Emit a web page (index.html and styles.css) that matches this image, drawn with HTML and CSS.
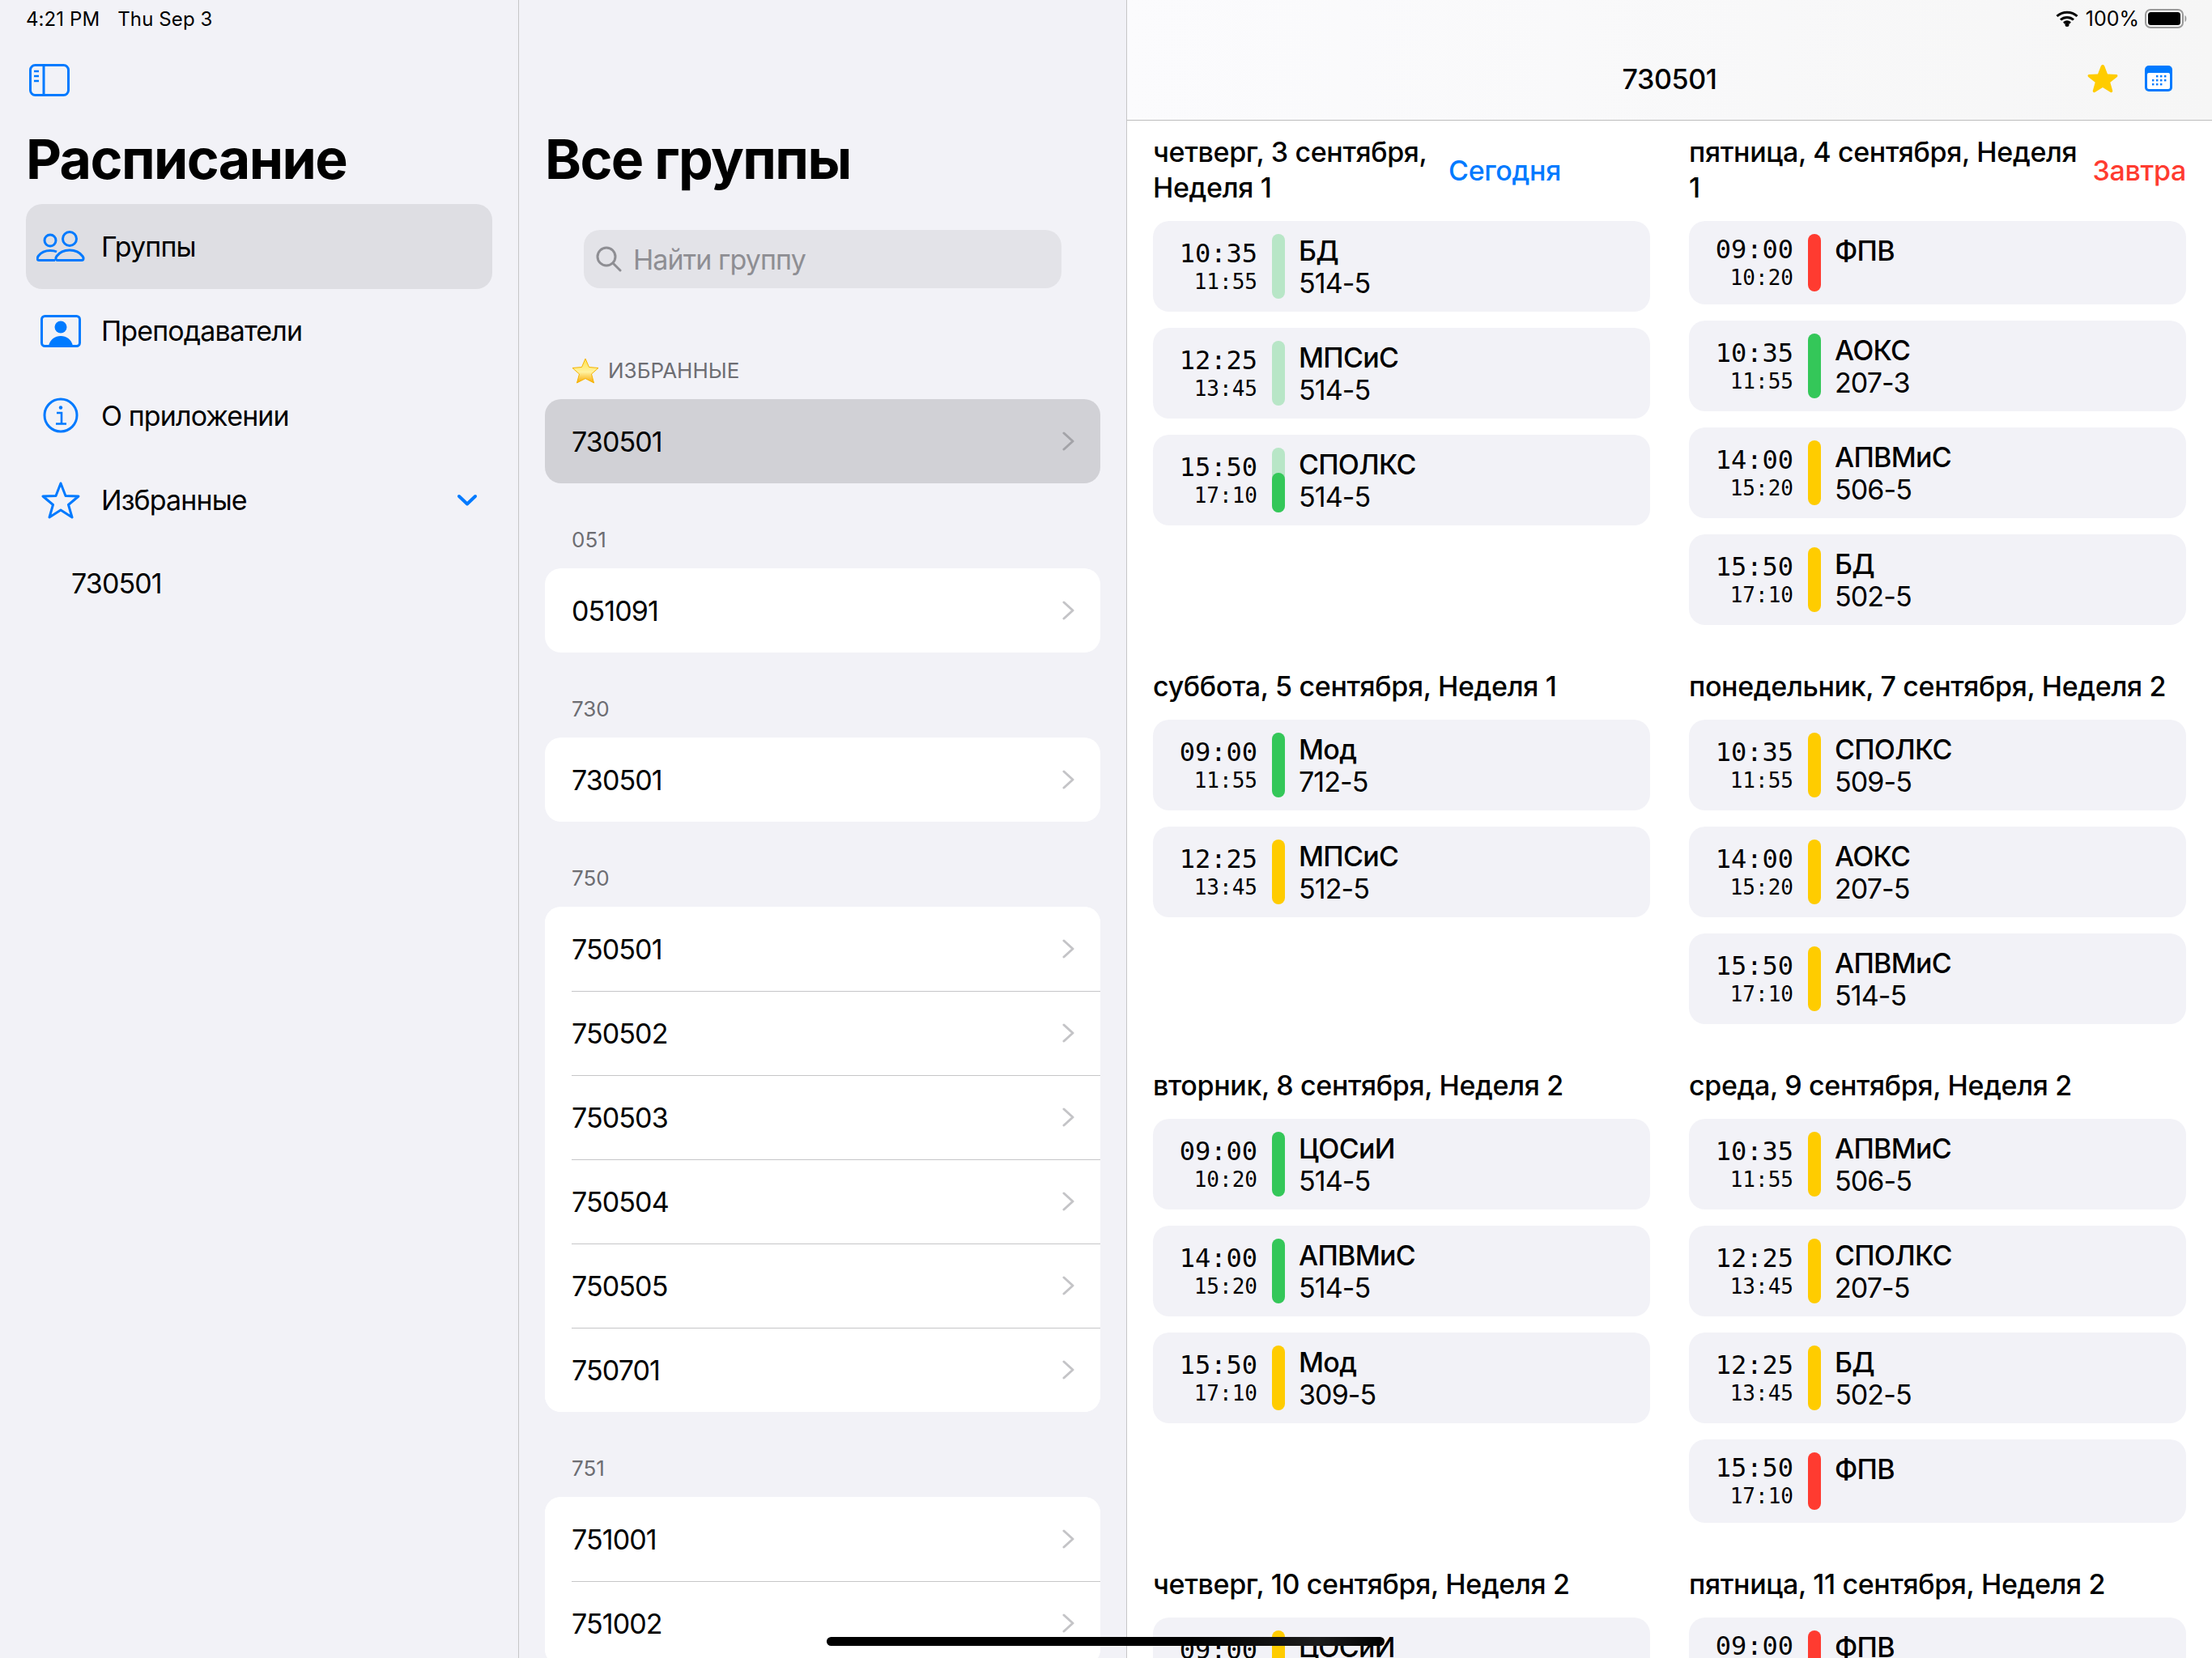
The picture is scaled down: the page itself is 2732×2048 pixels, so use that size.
FILE: index.html
```html
<!DOCTYPE html>
<html>
<head>
    <title>Расписание</title>
    <link rel="stylesheet" href="styles.css">
</head>
<body>
    <svg class="sprite" width="0" height="0">
        <defs>
            <symbol id="chevron" viewBox="0 0 15 24">
                <path d="M2 2 L13 12 L2 22" fill="none" stroke="currentColor" stroke-width="3" stroke-linecap="round" stroke-linejoin="round"/>
            </symbol>
        </defs>
    </svg>

    <div class="app">
        <aside class="sidebar">
            <div class="status-left"><span>4:21 PM</span><span>Thu Sep 3</span></div>
            <div class="toolbar">
                <svg width="50" height="40" viewBox="0 0 50 40" fill="none" stroke="#007aff">
                    <rect x="1.5" y="1.5" width="47" height="37" rx="6" stroke-width="3"/>
                    <path d="M18 1.5 V38.5" stroke-width="3"/>
                    <path d="M6 9 H12 M6 15 H12 M6 21 H12" stroke-width="2.4"/>
                </svg>
            </div>
            <h1 class="large-title">Расписание</h1>
            <nav class="side-menu">
                <div class="side-item active">
                    <span class="side-icon">
                        <svg width="60" height="38" viewBox="0 0 60 38" fill="none" stroke="#007aff" stroke-width="3">
                            <circle cx="17" cy="12" r="7"/>
                            <circle cx="41" cy="10" r="8.5"/>
                            <path d="M23 36.5 H3 C0.5 36.5 1 33 2.5 31 C6 26.5 11 24.5 17 24.5 C20 24.5 23 25 25 26"/>
                            <path d="M26 36.5 C23.5 36.5 23.5 33.5 25 31.5 C29 26 35 24 41 24 C47 24 53 26 57 31.5 C58.5 33.5 58.5 36.5 56 36.5 Z"/>
                        </svg>
                    </span>
                    <span>Группы</span>
                </div>
                <div class="side-item">
                    <span class="side-icon">
                        <svg width="50" height="40" viewBox="0 0 50 40">
                            <rect x="1.5" y="1.5" width="47" height="37" rx="4" fill="none" stroke="#007aff" stroke-width="3"/>
                            <circle cx="25" cy="15" r="7.5" fill="#007aff"/>
                            <path d="M10 38 C12 30 18 26 25 26 C32 26 38 30 40 38 Z" fill="#007aff"/>
                        </svg>
                    </span>
                    <span>Преподаватели</span>
                </div>
                <div class="side-item">
                    <span class="side-icon">
                        <svg width="44" height="44" viewBox="0 0 44 44" fill="none" stroke="#007aff">
                            <circle cx="22" cy="22" r="20" stroke-width="3"/>
                            <circle cx="22" cy="12.5" r="2.2" fill="#007aff" stroke="none"/>
                            <path d="M17 19 H23 V32 M16 32.5 H29" stroke-width="2.6"/>
                        </svg>
                    </span>
                    <span>О приложении</span>
                </div>
                <div class="side-item">
                    <span class="side-icon">
                        <svg width="48" height="46" viewBox="0 0 48 46" fill="none" stroke="#007aff" stroke-width="3" stroke-linejoin="round">
                            <path d="M24 2 L30 17.5 L46 18 L33.5 28.5 L38 44 L24 35 L10 44 L14.5 28.5 L2 18 L18 17.5 Z"/>
                        </svg>
                    </span>
                    <span>Избранные</span>
                    <svg class="side-chevron" width="26" height="16" viewBox="0 0 26 16" fill="none" stroke="#007aff" stroke-width="4" stroke-linecap="round" stroke-linejoin="round">
                        <path d="M3 3 L13 12.5 L23 3"/>
                    </svg>
                </div>
                <div class="side-sub">730501</div>
            </nav>
        </aside>

        <section class="groups">
            <h1 class="large-title">Все группы</h1>
            <div class="search">
                <svg width="32" height="32" viewBox="0 0 32 32" fill="none" stroke="#8e8e93" stroke-width="3" stroke-linecap="round">
                    <circle cx="13" cy="13" r="11"/>
                    <path d="M21 21 L30 30"/>
                </svg>
                <span>Найти группу</span>
            </div>

            <div class="section-label first">
                <svg width="34" height="32" viewBox="0 0 34 32">
                    <defs>
                        <linearGradient id="starFill" x1="0" y1="0" x2="0" y2="1">
                            <stop offset="0" stop-color="#ffe24d"/>
                            <stop offset="0.55" stop-color="#fff2a0"/>
                            <stop offset="1" stop-color="#f9a800"/>
                        </linearGradient>
                    </defs>
                    <path d="M17 1 L21.5 11.5 L33 12.5 L24.5 20 L27.5 31 L17 25.5 L6.5 31 L9.5 20 L1 12.5 L12.5 11.5 Z" fill="url(#starFill)" stroke="#f5b400" stroke-width="1" stroke-linejoin="round"/>
                </svg>
                <span>ИЗБРАННЫЕ</span>
            </div>
            <div class="group-card">
                <div class="group-row selected"><div class="row-inner"><span>730501</span><svg class="row-chevron" width="15" height="24"><use href="#chevron"/></svg></div></div>
            </div>

            <div class="section-label"><span>051</span></div>
            <div class="group-card">
                <div class="group-row"><div class="row-inner"><span>051091</span><svg class="row-chevron" width="15" height="24"><use href="#chevron"/></svg></div></div>
            </div>

            <div class="section-label"><span>730</span></div>
            <div class="group-card">
                <div class="group-row"><div class="row-inner"><span>730501</span><svg class="row-chevron" width="15" height="24"><use href="#chevron"/></svg></div></div>
            </div>

            <div class="section-label"><span>750</span></div>
            <div class="group-card">
                <div class="group-row"><div class="row-inner"><span>750501</span><svg class="row-chevron" width="15" height="24"><use href="#chevron"/></svg></div></div>
                <div class="group-row"><div class="row-inner"><span>750502</span><svg class="row-chevron" width="15" height="24"><use href="#chevron"/></svg></div></div>
                <div class="group-row"><div class="row-inner"><span>750503</span><svg class="row-chevron" width="15" height="24"><use href="#chevron"/></svg></div></div>
                <div class="group-row"><div class="row-inner"><span>750504</span><svg class="row-chevron" width="15" height="24"><use href="#chevron"/></svg></div></div>
                <div class="group-row"><div class="row-inner"><span>750505</span><svg class="row-chevron" width="15" height="24"><use href="#chevron"/></svg></div></div>
                <div class="group-row"><div class="row-inner"><span>750701</span><svg class="row-chevron" width="15" height="24"><use href="#chevron"/></svg></div></div>
            </div>

            <div class="section-label"><span>751</span></div>
            <div class="group-card">
                <div class="group-row"><div class="row-inner"><span>751001</span><svg class="row-chevron" width="15" height="24"><use href="#chevron"/></svg></div></div>
                <div class="group-row"><div class="row-inner"><span>751002</span><svg class="row-chevron" width="15" height="24"><use href="#chevron"/></svg></div></div>
            </div>
        </section>

        <main class="detail">
            <header class="detail-nav">
                <div class="status-right">
                    <svg class="wifi" width="28" height="20" viewBox="0 0 28 20" fill="none" stroke="#000" stroke-width="3">
                        <path d="M1.5 7 C8.5 0.5 19.5 0.5 26.5 7"/>
                        <path d="M6 11.5 C10.5 7.5 17.5 7.5 22 11.5"/>
                        <path d="M10 15.5 C12.5 13.5 15.5 13.5 18 15.5"/>
                        <circle cx="14" cy="17.5" r="2.5" fill="#000" stroke="none"/>
                    </svg>
                    <span>100%</span>
                    <svg width="53" height="24" viewBox="0 0 53 24">
                        <rect x="1" y="1" width="46" height="22" rx="6" fill="none" stroke="#9a9a9a" stroke-width="2"/>
                        <rect x="4" y="4" width="40" height="16" rx="3.5" fill="#000"/>
                        <path d="M49.5 8 C52 9 52 15 49.5 16 Z" fill="#9a9a9a"/>
                    </svg>
                </div>
                <div class="nav-row">
                    <span></span>
                    <div class="nav-title">730501</div>
                    <div class="nav-actions">
                        <svg width="38" height="36" viewBox="0 0 38 36">
                            <path d="M19 1 C20 1 20.8 1.6 21.2 2.6 L25 12.6 L35.8 13.1 C37.4 13.2 38 15 36.8 16 L28.3 22.7 L31.2 33 C31.6 34.6 30 35.7 28.7 34.9 L19 29 L9.3 34.9 C8 35.7 6.4 34.6 6.8 33 L9.7 22.7 L1.2 16 C0 15 0.6 13.2 2.2 13.1 L13 12.6 L16.8 2.6 C17.2 1.6 18 1 19 1 Z" fill="#ffcc00"/>
                        </svg>
                        <svg width="34" height="32" viewBox="0 0 34 32">
                            <rect x="0" y="0" width="34" height="32" rx="5" fill="#007aff"/>
                            <rect x="3" y="9" width="28" height="20" rx="2" fill="#fff"/>
                            <g fill="#007aff">
                                <rect x="14" y="12" width="2.4" height="2.4"/><rect x="19" y="12" width="2.4" height="2.4"/><rect x="24" y="12" width="2.4" height="2.4"/>
                                <rect x="9" y="17" width="2.4" height="2.4"/><rect x="14" y="17" width="2.4" height="2.4"/><rect x="19" y="17" width="2.4" height="2.4"/><rect x="24" y="17" width="2.4" height="2.4"/>
                                <rect x="9" y="22" width="2.4" height="2.4"/><rect x="14" y="22" width="2.4" height="2.4"/><rect x="19" y="22" width="2.4" height="2.4"/>
                            </g>
                        </svg>
                    </div>
                </div>
            </header>

            <div class="days">
                <div class="day">
                    <div class="day-head">
                        <div class="day-title narrow">четверг, 3 сентября, Неделя 1</div>
                        <div class="day-tag today">Сегодня</div>
                    </div>
                    <div class="lesson">
                        <div class="times"><div class="t-start">10:35</div><div class="t-end">11:55</div></div>
                        <div class="bar past"></div>
                        <div class="info"><div class="subject">БД</div><div class="room">514-5</div></div>
                    </div>
                    <div class="lesson">
                        <div class="times"><div class="t-start">12:25</div><div class="t-end">13:45</div></div>
                        <div class="bar past"></div>
                        <div class="info"><div class="subject">МПСиС</div><div class="room">514-5</div></div>
                    </div>
                    <div class="lesson">
                        <div class="times"><div class="t-start">15:50</div><div class="t-end">17:10</div></div>
                        <div class="bar past"><div class="bar-fill green" style="height: 61%"></div></div>
                        <div class="info"><div class="subject">СПОЛКС</div><div class="room">514-5</div></div>
                    </div>
                </div>

                <div class="day">
                    <div class="day-head">
                        <div class="day-title">пятница, 4 сентября, Неделя 1</div>
                        <div class="day-tag tomorrow">Завтра</div>
                    </div>
                    <div class="lesson">
                        <div class="times"><div class="t-start">09:00</div><div class="t-end">10:20</div></div>
                        <div class="bar red"></div>
                        <div class="info"><div class="subject">ФПВ</div></div>
                    </div>
                    <div class="lesson">
                        <div class="times"><div class="t-start">10:35</div><div class="t-end">11:55</div></div>
                        <div class="bar green"></div>
                        <div class="info"><div class="subject">АОКС</div><div class="room">207-3</div></div>
                    </div>
                    <div class="lesson">
                        <div class="times"><div class="t-start">14:00</div><div class="t-end">15:20</div></div>
                        <div class="bar yellow"></div>
                        <div class="info"><div class="subject">АПВМиС</div><div class="room">506-5</div></div>
                    </div>
                    <div class="lesson">
                        <div class="times"><div class="t-start">15:50</div><div class="t-end">17:10</div></div>
                        <div class="bar yellow"></div>
                        <div class="info"><div class="subject">БД</div><div class="room">502-5</div></div>
                    </div>
                </div>

                <div class="day">
                    <div class="day-head"><div class="day-title">суббота, 5 сентября, Неделя 1</div></div>
                    <div class="lesson">
                        <div class="times"><div class="t-start">09:00</div><div class="t-end">11:55</div></div>
                        <div class="bar green"></div>
                        <div class="info"><div class="subject">Мод</div><div class="room">712-5</div></div>
                    </div>
                    <div class="lesson">
                        <div class="times"><div class="t-start">12:25</div><div class="t-end">13:45</div></div>
                        <div class="bar yellow"></div>
                        <div class="info"><div class="subject">МПСиС</div><div class="room">512-5</div></div>
                    </div>
                </div>

                <div class="day">
                    <div class="day-head"><div class="day-title">понедельник, 7 сентября, Неделя 2</div></div>
                    <div class="lesson">
                        <div class="times"><div class="t-start">10:35</div><div class="t-end">11:55</div></div>
                        <div class="bar yellow"></div>
                        <div class="info"><div class="subject">СПОЛКС</div><div class="room">509-5</div></div>
                    </div>
                    <div class="lesson">
                        <div class="times"><div class="t-start">14:00</div><div class="t-end">15:20</div></div>
                        <div class="bar yellow"></div>
                        <div class="info"><div class="subject">АОКС</div><div class="room">207-5</div></div>
                    </div>
                    <div class="lesson">
                        <div class="times"><div class="t-start">15:50</div><div class="t-end">17:10</div></div>
                        <div class="bar yellow"></div>
                        <div class="info"><div class="subject">АПВМиС</div><div class="room">514-5</div></div>
                    </div>
                </div>

                <div class="day">
                    <div class="day-head"><div class="day-title">вторник, 8 сентября, Неделя 2</div></div>
                    <div class="lesson">
                        <div class="times"><div class="t-start">09:00</div><div class="t-end">10:20</div></div>
                        <div class="bar green"></div>
                        <div class="info"><div class="subject">ЦОСиИ</div><div class="room">514-5</div></div>
                    </div>
                    <div class="lesson">
                        <div class="times"><div class="t-start">14:00</div><div class="t-end">15:20</div></div>
                        <div class="bar green"></div>
                        <div class="info"><div class="subject">АПВМиС</div><div class="room">514-5</div></div>
                    </div>
                    <div class="lesson">
                        <div class="times"><div class="t-start">15:50</div><div class="t-end">17:10</div></div>
                        <div class="bar yellow"></div>
                        <div class="info"><div class="subject">Мод</div><div class="room">309-5</div></div>
                    </div>
                </div>

                <div class="day">
                    <div class="day-head"><div class="day-title">среда, 9 сентября, Неделя 2</div></div>
                    <div class="lesson">
                        <div class="times"><div class="t-start">10:35</div><div class="t-end">11:55</div></div>
                        <div class="bar yellow"></div>
                        <div class="info"><div class="subject">АПВМиС</div><div class="room">506-5</div></div>
                    </div>
                    <div class="lesson">
                        <div class="times"><div class="t-start">12:25</div><div class="t-end">13:45</div></div>
                        <div class="bar yellow"></div>
                        <div class="info"><div class="subject">СПОЛКС</div><div class="room">207-5</div></div>
                    </div>
                    <div class="lesson">
                        <div class="times"><div class="t-start">12:25</div><div class="t-end">13:45</div></div>
                        <div class="bar yellow"></div>
                        <div class="info"><div class="subject">БД</div><div class="room">502-5</div></div>
                    </div>
                    <div class="lesson">
                        <div class="times"><div class="t-start">15:50</div><div class="t-end">17:10</div></div>
                        <div class="bar red"></div>
                        <div class="info"><div class="subject">ФПВ</div></div>
                    </div>
                </div>

                <div class="day">
                    <div class="day-head"><div class="day-title">четверг, 10 сентября, Неделя 2</div></div>
                    <div class="lesson">
                        <div class="times"><div class="t-start">09:00</div><div class="t-end">10:20</div></div>
                        <div class="bar yellow"></div>
                        <div class="info"><div class="subject">ЦОСиИ</div><div class="room">514-5</div></div>
                    </div>
                </div>

                <div class="day">
                    <div class="day-head"><div class="day-title">пятница, 11 сентября, Неделя 2</div></div>
                    <div class="lesson">
                        <div class="times"><div class="t-start">09:00</div><div class="t-end">10:20</div></div>
                        <div class="bar red"></div>
                        <div class="info"><div class="subject">ФПВ</div></div>
                    </div>
                </div>
            </div>
        </main>
    </div>

    <div class="home-bar"></div>
</body>
</html>
```
FILE: styles.css
```css
* {
    box-sizing: border-box;
}

html, body {
    margin: 0;
    padding: 0;
    height: 2048px;
    overflow: hidden;
}

body {
    font-family: Inter, "Noto Sans", sans-serif;
    font-size: 34px;
    letter-spacing: -0.9px;
    color: #000;
    background-color: #fff;
}

svg {
    display: block;
    flex-shrink: 0;
}

.sprite {
    position: absolute;
}

.app {
    display: flex;
    height: 2048px;
}

/* left sidebar */
.sidebar {
    width: 641px;
    background-color: #f2f2f7;
    border-right: 1px solid #c6c6c8;
    padding: 0 32px;
}

.status-left {
    display: flex;
    gap: 22px;
    height: 46px;
    align-items: center;
    font-size: 24px;
    letter-spacing: 0.1px;
}

.toolbar {
    height: 109px;
    padding: 33px 0 0 4px;
}

.large-title {
    margin: 0;
    font-size: 68px;
    font-weight: 700;
    line-height: 82px;
    letter-spacing: -1.6px;
}

.side-menu {
    margin-top: 15px;
}

.side-item {
    display: flex;
    align-items: center;
    height: 104.5px;
    padding: 0 18px 0 12px;
    border-radius: 20px;
}

.side-item.active {
    background-color: #dedee3;
}

.side-icon {
    display: flex;
    justify-content: center;
    width: 62px;
    margin-right: 19px;
}

.side-chevron {
    margin-left: auto;
}

.side-sub {
    display: flex;
    align-items: center;
    height: 100px;
    padding-left: 56px;
}

/* groups list */
.groups {
    width: 751px;
    background-color: #f2f2f7;
    border-right: 1px solid #c6c6c8;
    padding: 155px 32px 0 32px;
    overflow: hidden;
}

.search {
    display: flex;
    align-items: center;
    gap: 14px;
    width: 590px;
    height: 72px;
    margin: 47px 0 0 48px;
    padding-left: 15px;
    border-radius: 20px;
    background-color: #e3e3e8;
    color: #8e8e93;
}

.section-label {
    display: flex;
    align-items: flex-end;
    gap: 11px;
    height: 105px;
    padding: 0 0 19px 33px;
    font-size: 26px;
    line-height: 32px;
    letter-spacing: 0;
    color: #6d6d72;
}

.section-label.first {
    height: 137px;
}

.group-card {
    background-color: #fff;
    border-radius: 20px;
    overflow: hidden;
}

.group-row {
    padding-left: 33px;
    background-color: #fff;
}

.group-row.selected {
    background-color: #d1d1d6;
}

.row-inner {
    display: flex;
    align-items: center;
    justify-content: space-between;
    height: 104px;
    padding-right: 32px;
}

.group-row + .group-row .row-inner {
    box-shadow: inset 0 1px 0 #c6c6c8;
}

.row-chevron {
    color: #c4c4c7;
}

.selected .row-chevron {
    color: #a3a3a8;
}

/* schedule */
.detail {
    flex: 1;
    min-width: 0;
    overflow: hidden;
}

.detail-nav {
    height: 149px;
    background: linear-gradient(to right, #fbfbfd, #f6f6f6);
    border-bottom: 1px solid #bdbdbd;
}

.status-right {
    display: flex;
    align-items: center;
    justify-content: flex-end;
    gap: 7px;
    height: 46px;
    padding-right: 30px;
    font-size: 25px;
    letter-spacing: 0;
}

.wifi {
    margin-right: 2px;
}

.nav-row {
    display: grid;
    grid-template-columns: 1fr auto 1fr;
    align-items: center;
    height: 102px;
}

.nav-title {
    font-weight: 500;
    letter-spacing: -0.4px;
}

.nav-actions {
    display: flex;
    align-items: center;
    justify-content: flex-end;
    gap: 33px;
    padding-right: 49px;
}

.days {
    display: grid;
    grid-template-columns: 614px 614px;
    column-gap: 48px;
    row-gap: 54px;
    padding: 17px 32px 0 32px;
}

.day {
    display: flex;
    flex-direction: column;
    gap: 19px;
}

.day .lesson + .lesson {
    margin-top: 1px;
}

.day-head {
    display: flex;
    align-items: center;
    gap: 19px;
}

.day-title {
    flex: 1;
    font-weight: 500;
    line-height: 44px;
    letter-spacing: -0.35px;
}

.day-title.narrow {
    flex: none;
    width: 346px;
}

.day-tag {
    font-weight: 500;
    letter-spacing: -0.3px;
}

.today {
    color: #007aff;
}

.tomorrow {
    color: #ff3b30;
}

.lesson {
    display: flex;
    gap: 17px;
    padding: 16px 0;
    border-radius: 20px;
    background-color: #f2f2f7;
}

.times {
    display: flex;
    flex-direction: column;
    justify-content: center;
    width: 129px;
    margin-right: 1px;
    text-align: right;
    font-family: "DejaVu Sans Mono", "Liberation Mono", monospace;
    letter-spacing: 0;
}

.t-start {
    font-size: 32px;
    line-height: 38px;
}

.t-end {
    font-size: 26px;
    line-height: 33px;
}

.bar {
    width: 16px;
    border-radius: 8px;
    display: flex;
    align-items: flex-end;
}

.bar-fill {
    width: 16px;
    border-radius: 8px;
}

.past {
    background-color: #b8e6c7;
}

.green {
    background-color: #34c759;
}

.yellow {
    background-color: #ffcc00;
}

.red {
    background-color: #ff3b30;
}

.subject {
    font-weight: 500;
    line-height: 41px;
    letter-spacing: -0.7px;
}

.room {
    line-height: 39px;
}

.home-bar {
    position: absolute;
    left: 1021px;
    top: 2022px;
    width: 689px;
    height: 11px;
    border-radius: 6px;
    background: linear-gradient(to right, #000 65%, #1c1c1c 88%, #000);
}
```
